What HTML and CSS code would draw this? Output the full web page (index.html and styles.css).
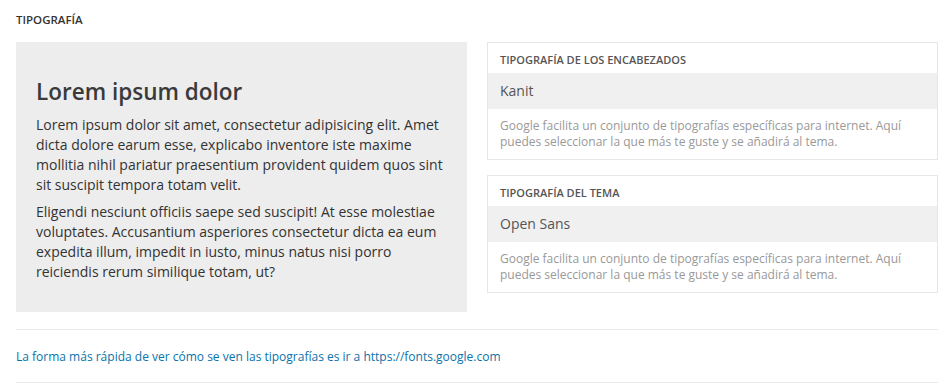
FILE: index.html
```html
<!doctype html>
<html>
  <head>
    <meta charset="utf-8">
    <title>Tipografía</title>
    <link rel="stylesheet" href="styles.css">
  </head>
  <body>
    <div class="panel">
      <h2 class="section-title">Tipografía</h2>
      <div class="row">
        <div class="preview">
          <h1>Lorem ipsum dolor</h1>
          <p>Lorem ipsum dolor sit amet, consectetur adipisicing elit. Amet dicta dolore earum esse, explicabo inventore iste maxime mollitia nihil pariatur praesentium provident quidem quos sint sit suscipit tempora totam velit.</p>
          <p>Eligendi nesciunt officiis saepe sed suscipit! At esse molestiae voluptates. Accusantium asperiores consectetur dicta ea eum expedita illum, impedit in iusto, minus natus nisi porro reiciendis rerum similique totam, ut?</p>
        </div>
        <div class="cards">
          <div class="card">
            <div class="card-title">Tipografía de los encabezados</div>
            <div class="card-value">Kanit</div>
            <div class="card-help">Google facilita un conjunto de tipografías específicas para internet. Aquí puedes seleccionar la que más te guste y se añadirá al tema.</div>
          </div>
          <div class="card">
            <div class="card-title">Tipografía del tema</div>
            <div class="card-value">Open Sans</div>
            <div class="card-help">Google facilita un conjunto de tipografías específicas para internet. Aquí puedes seleccionar la que más te guste y se añadirá al tema.</div>
          </div>
        </div>
      </div>
      <div class="note">
        <a href="#">La forma más rápida de ver cómo se ven las tipografías es ir a https://fonts.google.com</a>
      </div>
    </div>
  </body>
</html>
```

FILE: styles.css
```css
* { margin: 0; padding: 0; box-sizing: border-box; }
body { font-family: "Open Sans", "DejaVu Sans", sans-serif; color: #333; background: #fff; }

.panel {
  padding: 13px 9px 0 16px;
}

.section-title {
  font-size: 11.5px;
  font-weight: 600;
  text-transform: uppercase;
  line-height: 14px;
  color: #333;
  margin-bottom: 15px;
}

.row {
  display: grid;
  grid-template-columns: 1fr 1fr;
  gap: 20px;
  align-items: start;
}

.preview {
  background: #ededed;
  padding: 35px 20px 0;
  height: 270px;
}

.preview h1 {
  font-size: 22.5px;
  font-weight: 600;
  line-height: 30px;
  color: #3a3a3a;
  margin-bottom: 8px;
}

.preview p {
  font-size: 14px;
  line-height: 20px;
  color: #333;
  margin-bottom: 7px;
}

.cards {
  display: flex;
  flex-direction: column;
  gap: 15px;
}

.card {
  border: 1px solid #e6e6e6;
}

.card-title {
  font-size: 11px;
  font-weight: 600;
  text-transform: uppercase;
  color: #555;
  height: 30px;
  line-height: 14px;
  padding: 10px 12px 0;
}

.card-value {
  background: #f0f0f0;
  height: 36px;
  line-height: 36px;
  padding: 0 12px;
  font-size: 14px;
  color: #555;
}

.card-help {
  font-size: 12px;
  line-height: 16px;
  color: #999;
  padding: 9px 12px 9px;
}

.note {
  margin-top: 17px;
  border-top: 1px solid #ebebeb;
  border-bottom: 1px solid #ebebeb;
  padding: 17px 0 17px;
  line-height: 17px;
}

.note a {
  font-size: 12px;
  color: #0a73aa;
  text-decoration: none;
}
```
